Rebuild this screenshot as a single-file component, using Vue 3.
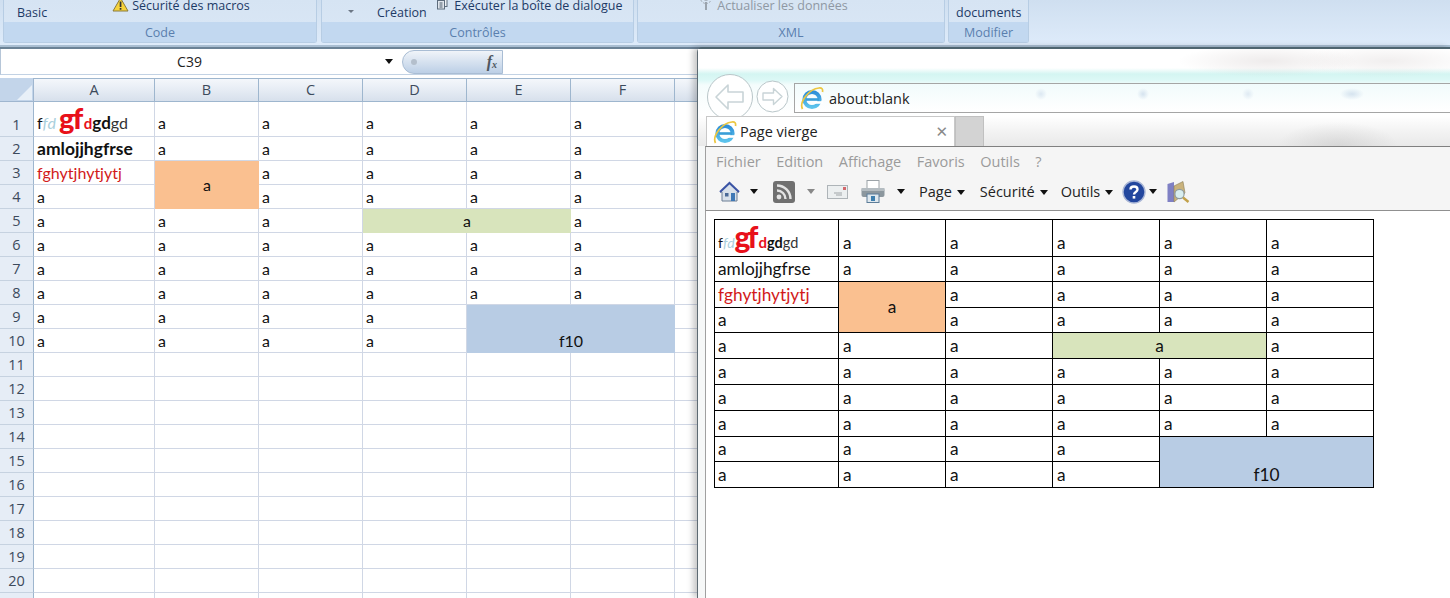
<template>
  <div class="screen">
    <!-- ruban excel -->
    <div class="ribbon">
      <div v-for="g in groups" :key="g.label" class="group" :style="{ width: g.width + 'px' }">
        <div class="group-body">
          <template v-if="g.label === 'Code'">
            <span class="rib-text basic">Basic</span>
            <span class="rib-text macros">
              <svg class="warn" width="17" height="15" viewBox="0 0 17 15">
                <path d="M8.5 1 L16 14 H1 Z" fill="#f6d33c" stroke="#8a7a3a" stroke-width="1" stroke-linejoin="round" />
                <rect x="7.7" y="4.5" width="1.7" height="5.5" fill="#333" />
                <rect x="7.7" y="11" width="1.7" height="1.7" fill="#333" />
              </svg>
              Sécurité des macros
            </span>
          </template>
          <template v-else-if="g.label === 'Contrôles'">
            <span class="mini-caret"></span>
            <span class="rib-text creation">Création</span>
            <span class="rib-text dialog">
              <svg class="dlg-icon" width="11" height="13" viewBox="0 0 11 13">
                <rect x="2" y="0.5" width="8" height="9" fill="#eef2f6" stroke="#5d6c7c" />
                <rect x="0.5" y="3.5" width="7" height="8.5" fill="#dfe5ec" stroke="#5d6c7c" />
                <path d="M2.5 6h3M2.5 8h3M2.5 10h3" stroke="#4a5a6a" />
              </svg>
              Exécuter la boîte de dialogue
            </span>
          </template>
          <template v-else-if="g.label === 'XML'">
            <span class="rib-text refresh">
              <svg class="xml-icon" width="18" height="13" viewBox="0 0 18 13">
                <circle cx="11" cy="1" r="5.5" fill="none" stroke="#a3acb6" stroke-dasharray="2 1.2" />
                <circle cx="11" cy="1" r="2.5" fill="none" stroke="#a3acb6" />
                <path d="M11 5v8" stroke="#9aa3ad" stroke-width="2" />
              </svg>
              Actualiser les données
            </span>
          </template>
          <template v-else>
            <span class="rib-text documents">documents</span>
          </template>
        </div>
        <div class="group-label">{{ g.label }}</div>
      </div>
    </div>

    <!-- barre de formule -->
    <div class="formula">
      <div class="name-box">C39</div>
      <span class="name-caret"></span>
      <div class="fx-pill">
        <span class="fx-dot"></span>
        <span class="fx">f<sub>x</sub></span>
      </div>
    </div>

    <!-- feuille -->
    <div class="sheet">
      <div class="corner"><span class="corner-tri"></span></div>
      <div v-for="c in columns" :key="c" class="col-head">{{ c }}</div>
      <template v-for="r in 21" :key="r">
        <div class="row-head">{{ r }}</div>
        <div
          v-for="cell in sheetRow(r)"
          :key="cell.key"
          class="cell"
          :class="cell.cls"
          :style="cell.style"
        >
          <span v-if="cell.rich" class="rich">f<i class="pale">fd</i><b class="big">gf</b><b class="reddish">d</b><b class="dark-b">gd</b><span class="grey">gd</span></span>
          <template v-else>{{ cell.text }}</template>
        </div>
      </template>
    </div>

    <!-- fenetre ie -->
    <div class="ie">
      <div class="ie-frame">
        <div class="ie-nav">
          <svg class="nav-back" width="48" height="48" viewBox="0 0 48 48">
            <circle cx="24" cy="24" r="22.5" fill="#fff" stroke="#b9c6c9" />
            <path d="M10 24 L22 12 V19 H37 V29 H22 V36 Z" fill="#fff" stroke="#c9d4d7" stroke-width="1.6" stroke-linejoin="round" />
          </svg>
          <svg class="nav-fwd" width="33" height="33" viewBox="0 0 33 33">
            <circle cx="16.5" cy="16.5" r="15.5" fill="#fff" stroke="#b9c6c9" />
            <path d="M26 16.5 L17.5 8.5 V13 H7 V20 H17.5 V24.5 Z" fill="#fff" stroke="#c9d4d7" stroke-width="1.4" stroke-linejoin="round" />
          </svg>
          <div class="addr">
            <svg class="ie-logo" width="24" height="24" viewBox="0 0 24 24">
              <use href="#ie-e" />
            </svg>
            <span>about:blank</span>
          </div>
        </div>
        <div class="ie-tabs">
          <div class="tab">
            <svg class="ie-logo" width="24" height="24" viewBox="0 0 24 24">
              <defs>
                <linearGradient id="ie-blue" x1="0" y1="0" x2="0" y2="1">
                  <stop offset="0" stop-color="#2f8fd8" />
                  <stop offset="1" stop-color="#5cc3ec" />
                </linearGradient>
                <g id="ie-e">
                  <circle cx="12" cy="13.5" r="7.6" fill="none" stroke="url(#ie-blue)" stroke-width="4" />
                  <rect x="6" y="12.2" width="13" height="2.6" fill="#3a9ed8" />
                  <rect x="14.5" y="15.2" width="8.5" height="2.6" fill="#fff" />
                  <path d="M2.5 23 C-1 16 9 3 19 2 C22 1.7 23 3 22.5 6" fill="none" stroke="#ecc640" stroke-width="1.7" />
                </g>
              </defs>
              <use href="#ie-e" />
            </svg>
            <span class="tab-title">Page vierge</span>
            <span class="tab-close">✕</span>
          </div>
          <div class="tab-new"></div>
        </div>
        <div class="ie-bars">
          <div class="menu">
            <span v-for="m in menus" :key="m">{{ m }}</span>
          </div>
          <div class="tools">
            <svg class="t-home" width="21" height="22" viewBox="0 0 21 22">
              <path d="M10.5 2 L20 11 H18 V20 H3 V11 H1 Z" fill="#d9e1ea" stroke="#6d7f95" />
              <path d="M1 11 L10.5 2 L20 11" fill="none" stroke="#3b54a5" stroke-width="2" />
              <rect x="6" y="12" width="3.5" height="3.5" fill="#4b6a96" />
              <rect x="12" y="12" width="4" height="8" fill="#3f78b5" />
            </svg>
            <span class="caret c1"></span>
            <svg class="t-rss" width="22" height="22" viewBox="0 0 22 22">
              <rect width="22" height="22" rx="3" fill="#707070" />
              <circle cx="6" cy="16" r="2.4" fill="#e4e4e4" />
              <path d="M4 9.5 A8.5 8.5 0 0 1 12.5 18" fill="none" stroke="#e4e4e4" stroke-width="2.4" />
              <path d="M4 4.5 A13.5 13.5 0 0 1 17.5 18" fill="none" stroke="#e4e4e4" stroke-width="2.4" />
            </svg>
            <span class="caret c2 muted"></span>
            <svg class="t-mail" width="21" height="14" viewBox="0 0 21 14">
              <rect x="0.5" y="0.5" width="20" height="13" fill="#eceff0" stroke="#aeb4b8" />
              <rect x="16" y="2" width="3" height="3" fill="#d2686c" />
              <path d="M7 8h8M9 10h6" stroke="#a0a5a8" />
            </svg>
            <svg class="t-print" width="24" height="23" viewBox="0 0 24 23">
              <rect x="6" y="0.5" width="12" height="8" fill="#fff" stroke="#9ca3a8" />
              <rect x="0.5" y="8" width="23" height="9" rx="2" fill="#8c979e" />
              <rect x="0.5" y="8" width="23" height="3" fill="#b4bcc1" />
              <rect x="6" y="14" width="12" height="8.5" fill="#dfe8ee" stroke="#5c7d99" />
              <rect x="10" y="16" width="4" height="5" fill="#3d7eae" />
            </svg>
            <span class="caret c3"></span>
            <span class="tool-btn btn-page">Page<span class="caret"></span></span>
            <span class="tool-btn btn-sec">Sécurité<span class="caret"></span></span>
            <span class="tool-btn">Outils<span class="caret"></span></span>
            <svg class="t-help" width="24" height="24" viewBox="0 0 24 24">
              <circle cx="12" cy="12" r="11" fill="#23479e" stroke="#a9b6d6" stroke-width="1.4" />
              <path d="M8.5 9.5 C8.5 5.5 15.5 5.5 15.5 9.5 C15.5 12 12 12 12 14.5" fill="none" stroke="#fff" stroke-width="2.4" />
              <rect x="10.7" y="16" width="2.6" height="2.6" fill="#fff" />
            </svg>
            <span class="caret c4"></span>
            <svg class="t-book" width="23" height="22" viewBox="0 0 23 22">
              <path d="M0.5 3 L7 1 V21 H0.5 Z" fill="#7f80c4" />
              <path d="M7 5 L16 0.5 L18 12 L7 21 Z" fill="#c9b27c" stroke="#8a7c55" stroke-width="0.6" />
              <circle cx="12.5" cy="13" r="4.6" fill="#d8eef0" stroke="#8f9ca0" stroke-width="1.2" />
              <path d="M16 16.5 L21.5 21" stroke="#c2a14a" stroke-width="2.4" />
            </svg>
          </div>
        </div>
        <div class="ie-page">
          <table class="web">
            <colgroup>
              <col class="w0" />
              <col v-for="n in 5" :key="n" class="w1" />
            </colgroup>
            <tbody>
              <tr class="r37">
                <td class="low rich-web">f<i class="pale">fd</i><b class="big">gf</b><b class="reddish">d</b><b class="small-b">gd</b><span class="small-g">gd</span></td>
                <td v-for="n in 5" :key="n" class="low">a</td>
              </tr>
              <tr class="r25">
                <td>amlojjhgfrse</td>
                <td v-for="n in 5" :key="n">a</td>
              </tr>
              <tr class="r26">
                <td class="red">fghytjhytjytj</td>
                <td rowspan="2" class="orange">a</td>
                <td v-for="n in 4" :key="n">a</td>
              </tr>
              <tr class="r25">
                <td>a</td>
                <td v-for="n in 4" :key="n">a</td>
              </tr>
              <tr class="r26">
                <td>a</td><td>a</td><td>a</td>
                <td colspan="2" class="green">a</td>
                <td>a</td>
              </tr>
              <tr v-for="n in 3" :key="n" class="r26">
                <td v-for="m in 6" :key="m">a</td>
              </tr>
              <tr class="r25">
                <td v-for="m in 4" :key="m">a</td>
                <td colspan="2" rowspan="2" class="blue">f10</td>
              </tr>
              <tr class="r26">
                <td v-for="m in 4" :key="m">a</td>
              </tr>
            </tbody>
          </table>
        </div>
      </div>
    </div>
  </div>
</template>

<script setup>
const groups = [
  { label: "Code", width: 314 },
  { label: "Contrôles", width: 313 },
  { label: "XML", width: 308 },
  { label: "Modifier", width: 81 },
];

const columns = ["A", "B", "C", "D", "E", "F", "G"];

// fusions de la feuille : [ligne, colonne] -> span
const merges = {
  "3-1": { text: "a", cls: "orange mid", rows: 2, cols: 1 },
  "5-3": { text: "a", cls: "green mid", rows: 1, cols: 2 },
  "9-4": { text: "f10", cls: "blue low-center", rows: 2, cols: 2 },
};
const hidden = new Set(["4-1", "5-4", "9-5", "10-4", "10-5"]);

const rowTexts = {
  1: "",
  2: "amlojjhgfrse",
  3: "fghytjhytjytj",
};

function sheetRow(r) {
  const out = [];
  for (let c = 0; c < 7; c++) {
    const id = r + "-" + c;
    if (hidden.has(id)) continue;
    const merge = merges[id];
    const cell = { key: id, text: "", cls: [], style: null };
    if (merge) {
      cell.text = merge.text;
      cell.cls.push(merge.cls);
      cell.style = { gridRow: "span " + merge.rows, gridColumn: "span " + merge.cols };
    } else if (r <= 10 && c < 6) {
      cell.text = c === 0 && rowTexts[r] ? rowTexts[r] : "a";
      if (r === 1) cell.cls.push("first-row");
      if (r === 1 && c === 0) cell.rich = true;
      if (r === 2 && c === 0) cell.cls.push("bold");
      if (r === 3 && c === 0) cell.cls.push("red");
    }
    out.push(cell);
  }
  return out;
}

const menus = ["Fichier", "Edition", "Affichage", "Favoris", "Outils", "?"];
</script>

<style>
html,
body {
  margin: 0;
  background: #fff;
  overflow: hidden;
}
</style>

<style scoped>
.screen {
  position: relative;
  width: 1450px;
  height: 598px;
  overflow: hidden;
  background: #fff;
  font-family: "Open Sans", "Noto Sans", sans-serif;
}

/* ruban */
.ribbon {
  display: flex;
  gap: 3px;
  height: 49px;
  padding-left: 3px;
  box-sizing: border-box;
  background: linear-gradient(#cfdff0 0, #deebfa 45px, #a9bed2 45px);
  border-bottom: 2px solid #6b8296;
}
.ribbon .group:nth-child(2) {
  margin-left: 1px;
}
.group {
  height: 43px;
  display: flex;
  flex-direction: column;
  background: linear-gradient(#d6e4f3, #dae7f6);
  border: 1px solid #b7cde4;
  border-top: 0;
  border-radius: 0 0 3px 3px;
  box-sizing: border-box;
}
.group-body {
  flex: 1;
  position: relative;
}
.group-label {
  height: 20px;
  line-height: 22px;
  text-align: center;
  font-size: 12.5px;
  color: #5a7fae;
  background: #c2d8f0;
}
.rib-text {
  position: absolute;
  font-size: 12.5px;
  line-height: 16px;
  color: #1d3a66;
  white-space: nowrap;
}
.basic {
  left: 13px;
  top: 5px;
}
.macros {
  left: 108px;
  top: -3px;
}
.warn {
  vertical-align: -2px;
}
.mini-caret {
  position: absolute;
  left: 26px;
  top: 10px;
  border: 3px solid transparent;
  border-top: 3px solid #6c7785;
}
.creation {
  left: 55px;
  top: 5px;
}
.dialog {
  left: 115px;
  top: -3px;
}
.dlg-icon {
  margin-right: 3px;
}
.refresh {
  left: 57px;
  top: -3px;
  color: #8f98a3;
}
.xml-icon {
  margin-right: 1px;
}
.documents {
  left: 7px;
  top: 5px;
}

/* barre de formule */
.formula {
  display: flex;
  align-items: center;
  height: 25px;
  background: #fff;
  border-bottom: 1px solid #c2d2e4;
  border-left: 1px solid #b6c6d8;
}
.name-box {
  width: 377px;
  text-align: center;
  font-size: 14px;
  color: #222;
  margin-right: 7px;
}
.name-caret {
  border: 4px solid transparent;
  border-top: 5px solid #111;
  margin: 4px 9px 0 0;
}
.fx-pill {
  position: relative;
  width: 101px;
  height: 24px;
  border: 1px solid #a9bdd4;
  border-radius: 12px 0 0 12px;
  background: linear-gradient(#f0f4f9, #bccfe6);
  box-sizing: border-box;
}
.fx-dot {
  position: absolute;
  left: 8px;
  top: 8px;
  width: 6px;
  height: 6px;
  border-radius: 50%;
  background: #b4bfcc;
}
.fx {
  position: absolute;
  right: 5px;
  top: 0;
  font: italic bold 16px/22px "Liberation Serif", serif;
  color: #4e5660;
}
.fx sub {
  font-size: 10px;
  vertical-align: -1px;
  line-height: 0;
}

/* feuille */
.sheet {
  display: grid;
  grid-template-columns: 34px 121px repeat(5, 104px) 200px;
  grid-template-rows: 24px 35px repeat(20, 24px);
  margin-top: 3px;
  font-size: 16px;
  font-family: "Lato", "Open Sans", sans-serif;
  color: #111;
}
.corner {
  position: relative;
  background: #c3d5ea;
  border-right: 1px solid #9fb6cf;
  border-bottom: 1px solid #9fb6cf;
  box-sizing: border-box;
}
.corner-tri {
  position: absolute;
  right: 1px;
  bottom: 1px;
  border-style: solid;
  border-width: 0 0 15px 15px;
  border-color: transparent transparent #e8f0f8 transparent;
}
.col-head {
  background: linear-gradient(#f4f7fb 0%, #e6ecf4 50%, #d7e0ec 100%);
  border-right: 1px solid #9eb6ce;
  border-bottom: 1px solid #9eb6ce;
  border-top: 1px solid #9eb6ce;
  box-sizing: border-box;
  text-align: center;
  line-height: 22px;
  font-family: "Open Sans", sans-serif;
  font-size: 14.5px;
  color: #3c4a5c;
}
.row-head {
  background: #e6edf6;
  border-right: 1px solid #9eb6ce;
  border-bottom: 1px solid #c6d2e0;
  box-sizing: border-box;
  display: flex;
  align-items: flex-end;
  justify-content: center;
  line-height: 23px;
  font-family: "Open Sans", sans-serif;
  font-size: 14.5px;
  color: #3c4a5c;
}
.cell {
  border-right: 1px solid #d0d7e5;
  border-bottom: 1px solid #d0d7e5;
  box-sizing: border-box;
  padding: 0 3px;
  line-height: 22px;
  display: flex;
  align-items: flex-end;
  white-space: nowrap;
  overflow: hidden;
}
.cell.first-row {
  padding-bottom: 2px;
}
.cell.bold {
  font-weight: 700;
  font-size: 17.5px;
}
.cell.red {
  color: #d21a1a;
}
.orange {
  background: #fac090;
}
.green {
  background: #d8e4bc;
}
.blue {
  background: #b8cce4;
}
.cell.mid {
  align-items: center;
  justify-content: center;
  border: 0;
}
.cell.low-center {
  align-items: flex-end;
  justify-content: center;
  border: 0;
  padding-bottom: 1px;
}
.pale {
  color: #a9cfdc;
  font-style: italic;
  margin-right: 3px;
}
.big {
  color: #e8111a;
  font-size: 29px;
  font-weight: 900;
  line-height: 0;
  letter-spacing: -1.5px;
}
.reddish {
  color: #e8111a;
  font-size: 15px;
  margin-left: 2px;
  line-height: 0;
}
.dark-b {
  font-size: 17px;
  line-height: 0;
}
.grey {
  color: #333;
}

/* fenetre ie, posee sur la feuille */
.ie {
  position: absolute;
  left: 697px;
  top: 47px;
  width: 753px;
  height: 551px;
  box-sizing: border-box;
  border-left: 2px solid #5d6a72;
  border-top: 2px solid #4e646f;
  border-radius: 5px 0 0 0;
  box-shadow: -4px 0 6px rgba(0, 0, 0, 0.22);
}
.ie-frame {
  height: 100%;
  display: flex;
  flex-direction: column;
  background: #f6f8f8;
  margin-left: -1px;
  overflow: hidden;
}
.ie-nav {
  position: relative;
  height: 67px;
  box-sizing: border-box;
  padding: 34px 0 0 96px;
  background:
    radial-gradient(ellipse 90px 16px at 570px 12px, rgba(200, 190, 190, 0.3), transparent),
    radial-gradient(ellipse 90px 16px at 690px 12px, rgba(200, 190, 190, 0.25), transparent),
    linear-gradient(to bottom, #fff 0, #fff 19px, #d4f5f2 25px, #dcf8f6 31px, #f4fcfc 36px, #fff 66px);
}
.nav-back {
  position: absolute;
  left: 8px;
  top: 24px;
}
.nav-fwd {
  position: absolute;
  left: 58px;
  top: 31px;
}
.addr {
  display: flex;
  align-items: center;
  gap: 5px;
  height: 30px;
  box-sizing: border-box;
  padding-left: 5px;
  border-top: 1px solid #a5a5a5;
  border-bottom: 1px solid #a5a5a5;
  border-left: 1px solid #a5a5a5;
  background:
    radial-gradient(circle 6px at 246px 10px, #dce8f2, transparent),
    radial-gradient(circle 6px at 348px 10px, #d5e3ef, transparent),
    radial-gradient(circle 6px at 453px 10px, #dfeaf3, transparent),
    radial-gradient(ellipse 12px 6px at 557px 10px, #d5e3ef, transparent),
    linear-gradient(#f1fbfc, #fff);
  font-size: 14.5px;
  color: #222;
}
.ie-tabs {
  display: flex;
  height: 30px;
  padding-left: 8px;
  background:
    radial-gradient(ellipse 60px 24px at 640px 30px, rgba(170, 170, 170, 0.3), transparent),
    linear-gradient(#fff, #f3f3f3 50%, #e9e9e9);
  position: relative;
  z-index: 1;
}
.tab {
  display: flex;
  align-items: center;
  width: 249px;
  padding-left: 6px;
  box-sizing: border-box;
  background: #fff;
  border: 1px solid #c8c8c8;
  border-bottom: 0;
  font-size: 14.5px;
  color: #222;
}
.tab-title {
  margin-left: 3px;
  flex: 1;
}
.tab-close {
  margin-right: 6px;
  color: #8a8a8a;
  font: bold 15px "DejaVu Sans", sans-serif;
}
.tab-new {
  width: 29px;
  background: #d3d3d3;
  border: 1px solid #c0c0c0;
  border-bottom: 0;
  box-sizing: border-box;
}
.ie-bars {
  margin-left: 7px;
  height: 63px;
  background: #f5f5f5;
  border-top: 1px solid #808080;
  border-bottom: 1px solid #909090;
  border-left: 1px solid #a0a0a0;
  display: flex;
  flex-direction: column;
}
.menu {
  display: flex;
  gap: 15.5px;
  height: 28px;
  align-items: center;
  padding-left: 10px;
  font-size: 14.5px;
  color: #9b9b9b;
}
.tools {
  display: flex;
  align-items: center;
  height: 33px;
  padding-left: 13px;
  font-size: 14.5px;
  color: #222;
}
.caret {
  display: inline-block;
  width: 0;
  height: 0;
  border: 4.5px solid transparent;
  border-top: 5px solid #111;
  border-bottom: 0;
}
.caret.muted {
  border-top-color: #888;
}
.c1 {
  margin: 0 15px 0 10px;
}
.c2 {
  margin: 0 12px 0 12px;
}
.t-print {
  margin-left: 13px;
}
.c3 {
  margin: 0 14px 0 12px;
}
.tool-btn {
  display: inline-flex;
  align-items: center;
  gap: 5px;
  margin-right: 14px;
}
.btn-page {
  margin-right: 15px;
}
.btn-sec {
  margin-right: 13px;
}
.tool-btn .caret {
  margin-top: 2px;
}
.t-help {
  margin-left: -5px;
}
.c4 {
  margin: 0 10px 0 3px;
}
.ie-page {
  flex: 1;
  background: #fff;
  padding: 8px 0 0 8px;
  margin-left: 7px;
  border-left: 1px solid #a0a0a0;
}
.web {
  border-collapse: collapse;
  table-layout: fixed;
  width: 660px;
  font-family: "Lato", "Open Sans", sans-serif;
  font-size: 17.3px;
  color: #111;
}
.w0 {
  width: 124px;
}
.w1 {
  width: 107px;
}
.web td {
  border: 1px solid #000;
  padding: 0 4px;
  white-space: nowrap;
  overflow: hidden;
  vertical-align: middle;
  line-height: 20px;
}
.web td:first-child {
  padding-left: 3px;
}
.r37 {
  height: 37px;
}
.r25 {
  height: 25px;
}
.r26 {
  height: 26px;
}
.web td.orange,
.web td.green {
  text-align: center;
}
.web td.blue {
  text-align: center;
  vertical-align: bottom;
  line-height: 24px;
}
.web .red {
  color: #d21a1a;
}
.web td.low {
  vertical-align: bottom;
  line-height: 26px;
}
.web td.rich-web {
  font-size: 14px;
  line-height: 27px;
}
.rich-web .pale {
  margin-right: 0;
}
.rich-web .big {
  font-size: 30px;
  letter-spacing: -3px;
}
.rich-web .reddish {
  margin-left: 3px;
  font-size: 15px;
}
.small-b {
  font-size: 14.5px;
  line-height: 0;
}
.small-g {
  color: #333;
  font-size: 14.5px;
  line-height: 0;
}
</style>
